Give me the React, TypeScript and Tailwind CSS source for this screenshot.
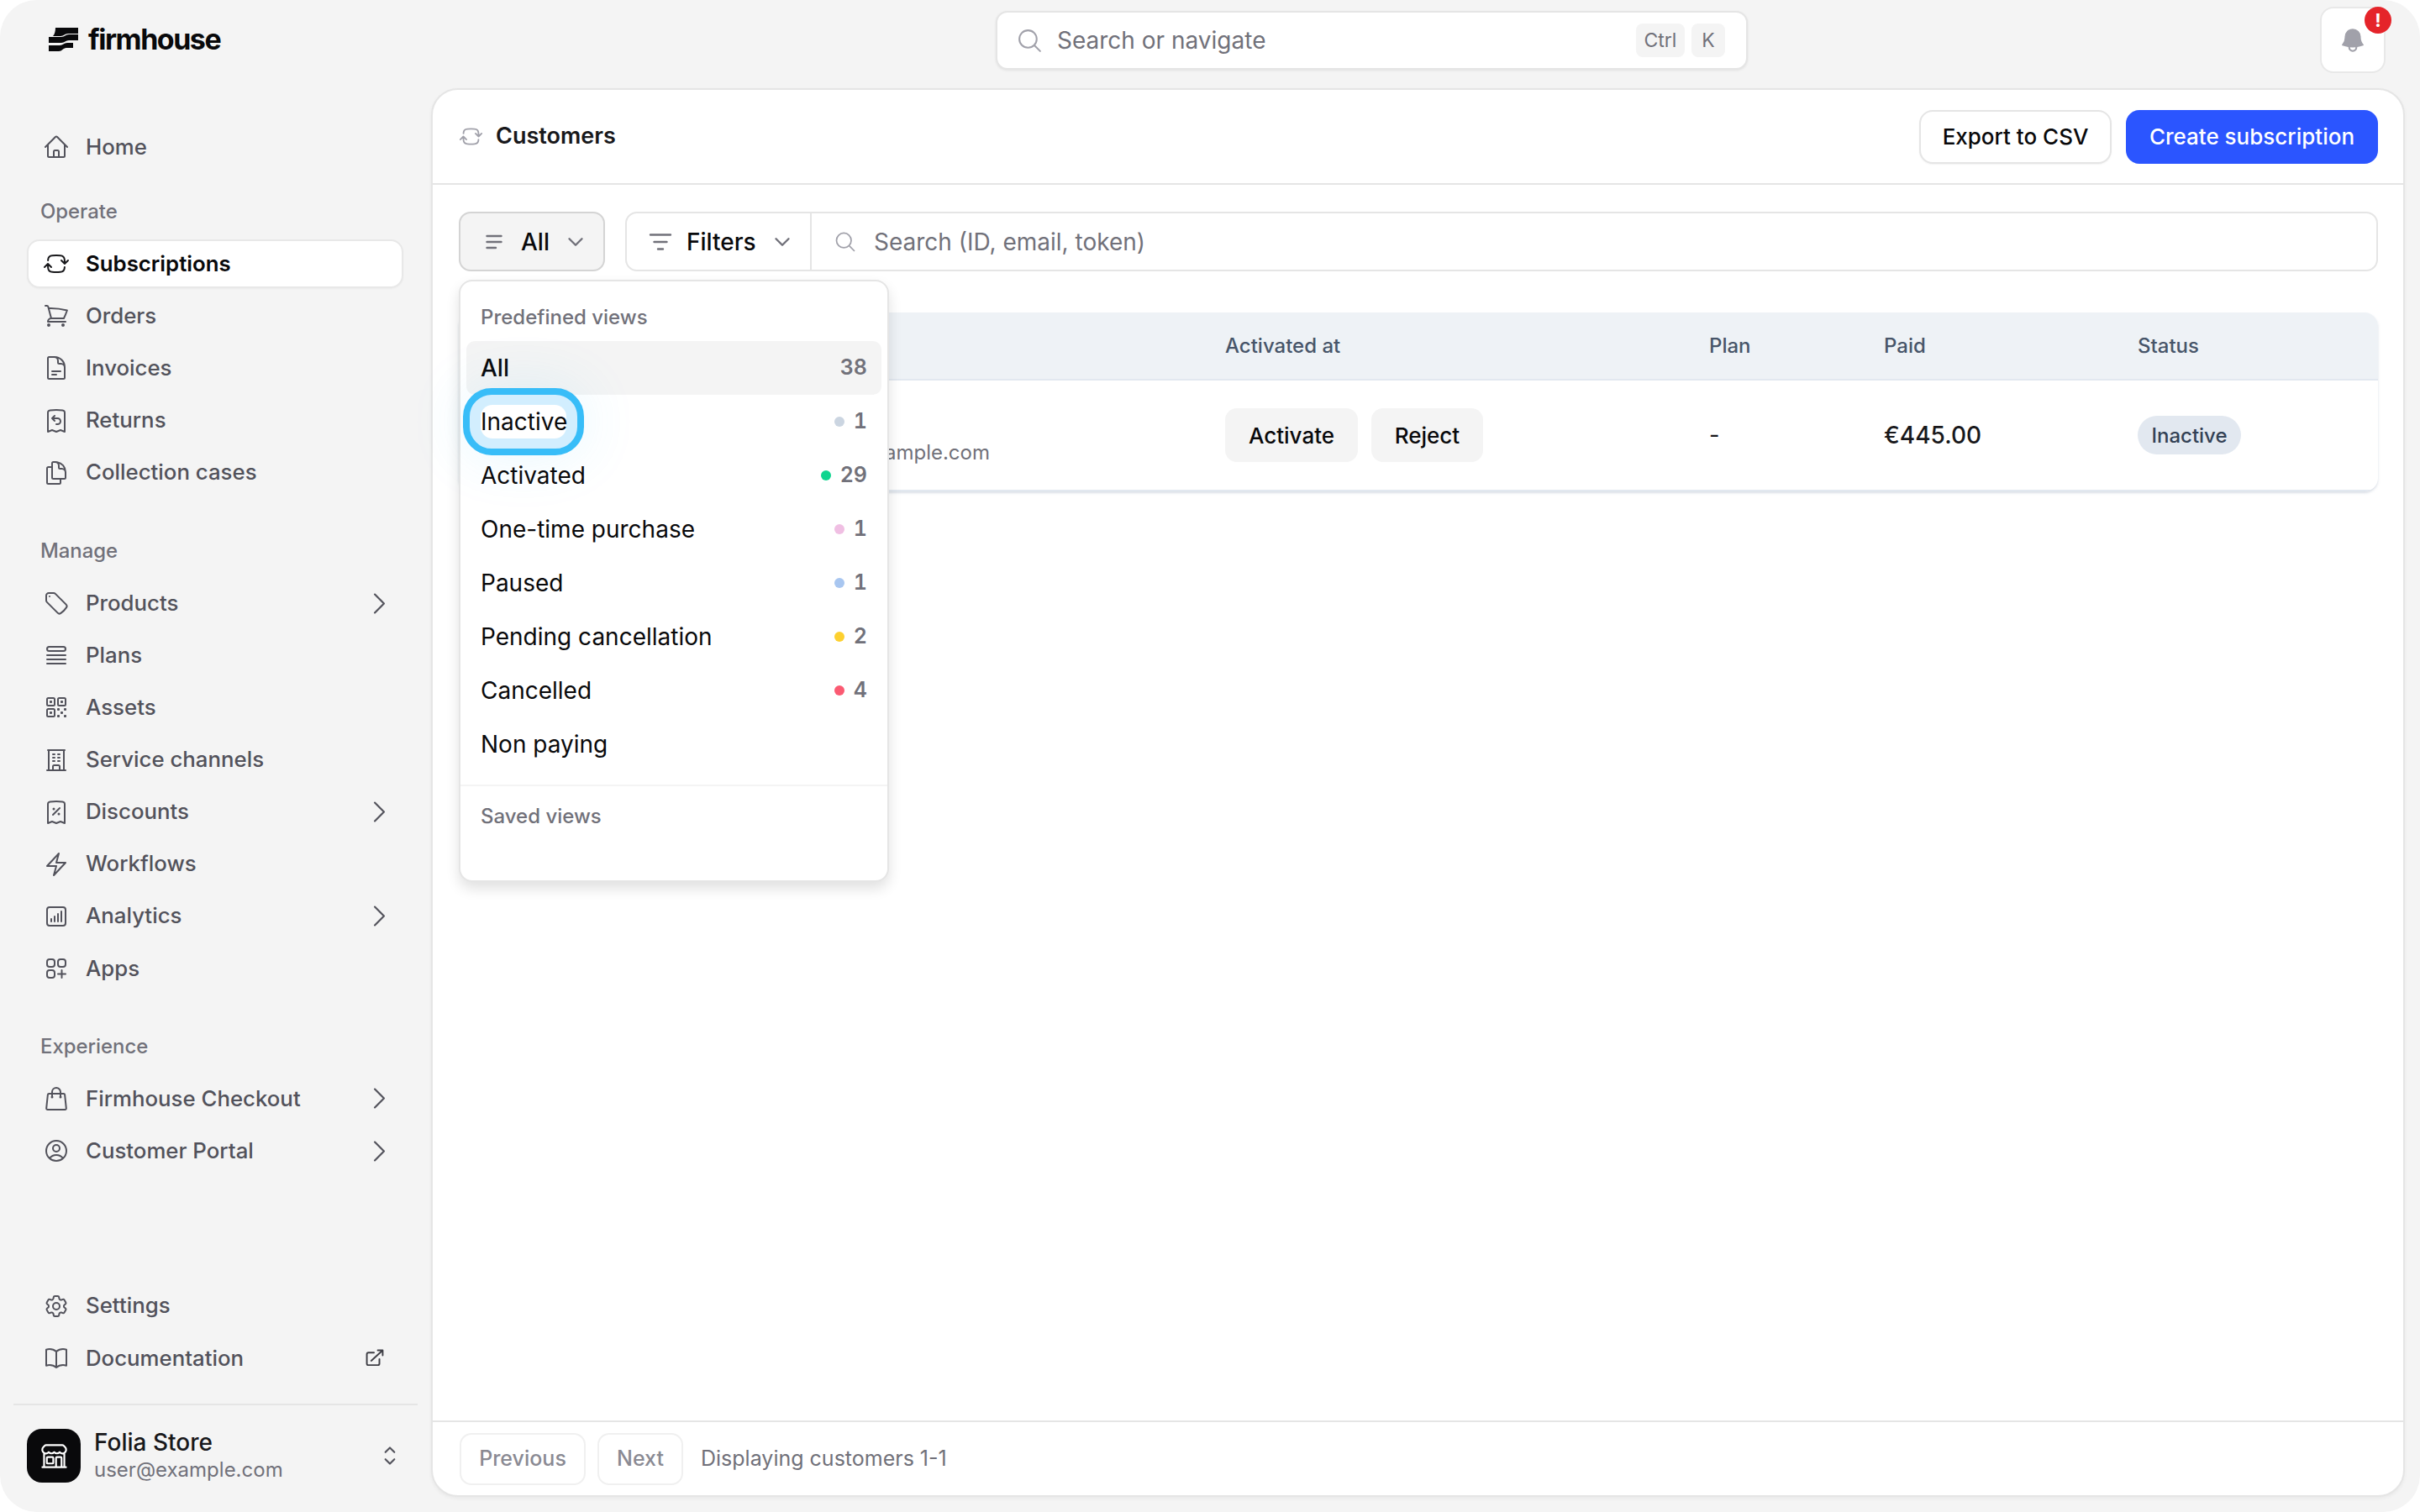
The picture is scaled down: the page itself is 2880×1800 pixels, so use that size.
import React from "react";
import {
  HiOutlineHome,
  HiOutlineArrowPathRoundedSquare,
  HiOutlineShoppingCart,
  HiOutlineDocumentText,
  HiOutlineReceiptRefund,
  HiOutlineDocumentDuplicate,
  HiOutlineTag,
  HiOutlineQueueList,
  HiOutlineQrCode,
  HiOutlineBuildingOffice,
  HiOutlineReceiptPercent,
  HiOutlineBolt,
  HiOutlineChartBarSquare,
  HiOutlineSquaresPlus,
  HiOutlineShoppingBag,
  HiOutlineUserCircle,
  HiOutlineCog6Tooth,
  HiOutlineBookOpen,
  HiOutlineBuildingStorefront,
  HiOutlineChevronRight,
  HiOutlineChevronUpDown,
  HiOutlineChevronDown,
  HiOutlineMagnifyingGlass,
  HiBell,
  HiMiniArrowTopRightOnSquare,
} from "react-icons/hi2";

type IconT = React.ComponentType<{ size?: number; className?: string }>;

function NavRow({ icon: Icon, label, active, chevron, external }: { icon: IconT; label: string; active?: boolean; chevron?: boolean; external?: boolean }) {
  return (
    <div
      className={
        active
          ? "flex h-[58px] items-center rounded-[15px] border-2 border-[#e8e8e8] bg-white pl-[16.5px] pr-[9px] shadow-[0_1px_2px_rgba(0,0,0,0.04)]"
          : "flex h-[58px] items-center rounded-[15px] border-2 border-transparent pl-[16.5px] pr-[9px]"
      }
    >
      <Icon size={32} className={active ? "shrink-0 text-[#18181b]" : "shrink-0 text-[#52525b]"} />
      <span className={active ? "ml-[19.5px] text-[25.8px] font-semibold text-[#09090b]" : "ml-[19.5px] text-[25.8px] font-medium text-[#52525b]"}>{label}</span>
      {chevron && <HiOutlineChevronRight size={35} className="ml-auto shrink-0 text-[#52525b]" />}
      {external && <HiMiniArrowTopRightOnSquare size={26} className="ml-auto mr-[10px] shrink-0 text-[#3f3f46]" />}
    </div>
  );
}

function SectionLabel({ children, className }: { children: string; className: string }) {
  return <div className={"flex h-[40px] items-center pl-[16px] text-[23.9px] font-medium text-[#71717a] " + className}>{children}</div>;
}

function ViewRow({ label, count, dot, active, focus }: { label: string; count?: string; dot?: string; active?: boolean; focus?: boolean }) {
  return (
    <div className={active ? "relative flex h-[64px] items-center rounded-[10px] bg-[#f4f4f4] pl-[17px] pr-[17px]" : "relative flex h-[64px] items-center rounded-[10px] pl-[17px] pr-[17px]"}>
      {focus && (
        <div className="absolute left-[-4px] top-[-8px] flex h-[80px] w-[144px] items-center justify-center rounded-[34px] border-[8px] border-[#38bdf8] bg-[#d2eefe] shadow-[0_0_70px_rgba(56,189,248,0.12)]">
          <div className="h-[40px] w-[102px] rounded-[14px] bg-white" />
        </div>
      )}
      <span className={active ? "relative text-[28px] font-medium text-[#09090b]" : "relative text-[28px] text-[#09090b]"}>{label}</span>
      {dot && <span className={"relative ml-auto h-[12px] w-[12px] rounded-full " + dot} />}
      {count && <span className={dot ? "relative ml-[11px] text-[25px] font-semibold tabular-nums text-[#71717a]" : "relative ml-auto text-[25px] font-semibold tabular-nums text-[#71717a]"}>{count}</span>}
    </div>
  );
}

function Logo() {
  return (
    <svg width="37" height="30" viewBox="0 0 37 30" className="shrink-0">
      <path d="M9 1H36V8H24C20 8 19 11 15 11H6C8 9 9 5 9 1Z" fill="#09090b" />
      <path d="M1 12H16C20 12 21 9 25 9H36V16H25C21 16 20 19 16 19H1Z" fill="#09090b" />
      <path d="M1 22H14C18 22 19 19 23 19H30V25H22C18 25 17 29 13 29H1Z" fill="#09090b" />
    </svg>
  );
}

export default function App() {
  return (
    <div className="h-[1800px] w-[2880px] overflow-hidden bg-white [font-family:Inter,sans-serif]">
      <div className="flex h-full w-full flex-col rounded-[44px] bg-[#f4f4f4]">
        {/* Top bar */}
        <div className="relative flex h-[105px] shrink-0 items-start">
          <div className="ml-[57px] mt-[32px] flex w-[206px] items-center gap-[11px]">
            <Logo />
            <span className="text-[34px] font-bold leading-[30px] tracking-[-1.5px] text-[#09090b]">firmhouse</span>
          </div>
          <div className="ml-[922px] mt-[13px] flex h-[70px] w-[895px] items-center rounded-[14px] border-2 border-[#e5e5e5] bg-white pl-[22px] pr-[25px] shadow-[0_1px_3px_rgba(0,0,0,0.08)]">
            <HiOutlineMagnifyingGlass size={33} className="shrink-0 text-[#a1a1aa]" />
            <span className="ml-[16px] text-[28px] text-[#71717a]">Search or navigate</span>
            <span className="ml-auto flex h-[40px] w-[58px] items-center justify-center rounded-[8px] bg-[#f4f4f4] text-[23px] text-[#71717a]">Ctrl</span>
            <span className="ml-[8px] flex h-[40px] w-[40px] items-center justify-center rounded-[8px] bg-[#f4f4f4] text-[23px] text-[#71717a]">K</span>
          </div>
          <div className="ml-[681px] mt-[8px] flex h-[79px] w-[78px] items-center justify-center rounded-[16px] border-2 border-[#e8e8e8] bg-white">
            <HiBell size={34} className="text-[#a1a1aa]" />
          </div>
          <span className="absolute left-[2814px] top-[8px] flex h-[32px] w-[32px] items-center justify-center rounded-full bg-[#e5242a] text-[22px] font-bold leading-none text-white">!</span>
        </div>

        <div className="flex min-h-0 flex-1">
          {/* Sidebar */}
          <div className="flex w-[513px] shrink-0 flex-col">
            <div className="flex flex-1 flex-col pl-[32px] pr-[33px] pt-[41px]">
              <NavRow icon={HiOutlineHome} label="Home" />
              <SectionLabel className="mt-[28px] mb-[13px]">Operate</SectionLabel>
              <div className="flex flex-col gap-[4.2px]">
                <NavRow icon={HiOutlineArrowPathRoundedSquare} label="Subscriptions" active />
                <NavRow icon={HiOutlineShoppingCart} label="Orders" />
                <NavRow icon={HiOutlineDocumentText} label="Invoices" />
                <NavRow icon={HiOutlineReceiptRefund} label="Returns" />
                <NavRow icon={HiOutlineDocumentDuplicate} label="Collection cases" />
              </div>
              <SectionLabel className="mt-[44px] mb-[13.5px]">Manage</SectionLabel>
              <div className="flex flex-col gap-[4.1px]">
                <NavRow icon={HiOutlineTag} label="Products" chevron />
                <NavRow icon={HiOutlineQueueList} label="Plans" />
                <NavRow icon={HiOutlineQrCode} label="Assets" />
                <NavRow icon={HiOutlineBuildingOffice} label="Service channels" />
                <NavRow icon={HiOutlineReceiptPercent} label="Discounts" chevron />
                <NavRow icon={HiOutlineBolt} label="Workflows" />
                <NavRow icon={HiOutlineChartBarSquare} label="Analytics" chevron />
                <NavRow icon={HiOutlineSquaresPlus} label="Apps" />
              </div>
              <SectionLabel className="mt-[44px] mb-[13px]">Experience</SectionLabel>
              <div className="flex flex-col gap-[4.2px]">
                <NavRow icon={HiOutlineShoppingBag} label="Firmhouse Checkout" chevron />
                <NavRow icon={HiOutlineUserCircle} label="Customer Portal" chevron />
              </div>
              <div className="mt-auto flex flex-col gap-[4.2px] pb-[25px]">
                <NavRow icon={HiOutlineCog6Tooth} label="Settings" />
                <NavRow icon={HiOutlineBookOpen} label="Documentation" external />
              </div>
            </div>
            <div className="mx-[16px] flex h-[129px] items-start border-t-2 border-[#e5e5e5] pl-[16px] pr-[16px] pt-[28px]">
              <div className="flex h-[64px] w-[64px] shrink-0 items-center justify-center rounded-[18px] bg-[#09090b]">
                <HiOutlineBuildingStorefront size={35} className="text-white" />
              </div>
              <div className="ml-[16px] flex flex-col">
                <span className="text-[28px] font-medium leading-[32px] text-[#18181b]">Folia Store</span>
                <span className="text-[24px] leading-[34px] text-[#71717a]">user@example.com</span>
              </div>
              <HiOutlineChevronUpDown size={34} className="ml-auto mt-[15px] text-[#52525b]" />
            </div>
          </div>

          {/* Main panel */}
          <div className="mb-[18px] mr-[18px] flex min-w-0 flex-1 flex-col rounded-[32px] border-2 border-[#e5e5e5] bg-white shadow-[0_2px_4px_rgba(0,0,0,0.05)]">
            <div className="flex h-[113px] shrink-0 items-center border-b-2 border-[#e5e5e5] pl-[31px] pr-[30px]">
              <HiOutlineArrowPathRoundedSquare size={29} className="shrink-0 text-[#a1a1aa]" />
              <span className="ml-[15px] text-[27px] font-semibold text-[#18181b]">Customers</span>
              <div className="ml-auto flex h-[64px] w-[229px] items-center justify-center rounded-[16px] border-2 border-[#e5e5e5] bg-white text-[26px] font-medium text-[#09090b] shadow-[0_1px_2px_rgba(0,0,0,0.05)]">Export to CSV</div>
              <div className="ml-[17px] flex h-[64px] w-[300px] items-center justify-center rounded-[16px] bg-[#2b55ff] text-[26px] font-medium text-white">Create subscription</div>
            </div>

            <div className="relative min-h-0 flex-1 pl-[31px] pr-[30px] pt-[32px]">
              {/* Toolbar */}
              <div className="flex h-[71px] items-stretch">
                <div className="flex w-[174px] items-center rounded-[14px] border-2 border-[#d4d4d4] bg-[#f4f4f4] pl-[30px]">
                  <svg width="20" height="20" viewBox="0 0 20 20" fill="none" stroke="#71717a" strokeWidth="2.4" strokeLinecap="round" className="shrink-0">
                    <path d="M1.5 3H18.5M1.5 10H18.5M1.5 17H12" />
                  </svg>
                  <span className="ml-[22px] text-[28px] font-medium text-[#09090b]">All</span>
                  <HiOutlineChevronDown size={24} className="ml-[19px] shrink-0 text-[#71717a] [stroke-width:2.4]" />
                </div>
                <div className="ml-[24px] flex min-w-0 flex-1 items-center rounded-[14px] border-2 border-[#e5e5e5] bg-white">
                  <div className="flex h-full w-[220px] shrink-0 items-center border-r-2 border-[#e5e5e5] pl-[26px]">
                    <svg width="28" height="22" viewBox="0 0 28 22" fill="none" stroke="#71717a" strokeWidth="2.4" strokeLinecap="round" className="shrink-0">
                      <path d="M2 2.5H26M6.5 11H21.5M11 19.5H17" />
                    </svg>
                    <span className="ml-[17px] text-[28px] font-medium text-[#09090b]">Filters</span>
                    <HiOutlineChevronDown size={24} className="ml-[19px] shrink-0 text-[#71717a] [stroke-width:2.4]" />
                  </div>
                  <HiOutlineMagnifyingGlass size={28} className="ml-[26px] shrink-0 text-[#a1a1aa]" />
                  <span className="ml-[20px] text-[28px] text-[#71717a]">Search (ID, email, token)</span>
                </div>
              </div>

              {/* Table */}
              <div className="mt-[49px] overflow-hidden rounded-[16px] bg-white shadow-[0_2px_3px_rgba(148,163,184,0.35)]">
                <div className="grid h-[81px] grid-cols-[912px_576px_208px_302px_1fr] items-center border-b-2 border-[#e2e8f0] bg-[#eef2f6] text-[24px] font-medium text-[#475569]">
                  <span />
                  <span>Activated at</span>
                  <span>Plan</span>
                  <span>Paid</span>
                  <span>Status</span>
                </div>
                <div className="grid h-[132px] grid-cols-[912px_576px_208px_302px_1fr] items-center border-b-2 border-[#e2e8f0]">
                  <span className="self-start pt-[68px] text-right pr-[280px] text-[24px] text-[#71717a]">user@example.com</span>
                  <div className="flex gap-[16px]">
                    <div className="flex h-[64px] w-[158px] items-center justify-center rounded-[14px] bg-[#f4f4f4] pt-[1px] text-[26px] font-medium text-[#09090b]">Activate</div>
                    <div className="flex h-[64px] w-[133px] items-center justify-center rounded-[14px] bg-[#f4f4f4] pt-[1px] text-[26px] font-medium text-[#09090b]">Reject</div>
                  </div>
                  <span className="text-[27px] text-[#18181b]">-</span>
                  <span className="text-[28px] font-medium text-[#18181b]">€445.00</span>
                  <span className="flex h-[46px] w-[123px] items-center justify-center rounded-full bg-[#e2e8f0] pt-[2px] text-[24px] font-medium text-[#334155]">Inactive</span>
                </div>
              </div>

              {/* Dropdown */}
              <div className="absolute left-[31px] top-[113px] h-[717px] w-[512px] rounded-[16px] border-2 border-[#e5e5e5] bg-white shadow-[0_8px_16px_rgba(0,0,0,0.12)]">
                <div className="flex h-[71px] items-start pl-[24px] pt-[23px] text-[24px] font-medium text-[#71717a]">
                  <span className="leading-[40px]">Predefined views</span>
                </div>
                <div className="flex flex-col px-[7px]">
                  <ViewRow label="All" count="38" active />
                  <ViewRow label="Inactive" count="1" dot="bg-[#cbd5e1]" focus />
                  <ViewRow label="Activated" count="29" dot="bg-[#0fd58f]" />
                  <ViewRow label="One-time purchase" count="1" dot="bg-[#f0bfe3]" />
                  <ViewRow label="Paused" count="1" dot="bg-[#a8c6f0]" />
                  <ViewRow label="Pending cancellation" count="2" dot="bg-[#fdd02f]" />
                  <ViewRow label="Cancelled" count="4" dot="bg-[#fb5a72]" />
                  <ViewRow label="Non paying" />
                </div>
                <div className="mt-[16px] border-t-2 border-[#f4f4f4] pl-[24px] pt-[16px] text-[24px] font-medium leading-[40px] text-[#71717a]">Saved views</div>
              </div>
            </div>

            <div className="flex h-[89px] shrink-0 items-center border-t-2 border-[#e5e5e5] pl-[32px]">
              <div className="flex h-[62px] w-[150px] items-center justify-center rounded-[14px] border-2 border-[#f0f0f0] text-[25px] font-medium text-[#8a8a93]">Previous</div>
              <div className="ml-[14px] flex h-[62px] w-[102px] items-center justify-center rounded-[14px] border-2 border-[#f0f0f0] text-[25px] font-medium text-[#8a8a93]">Next</div>
              <span className="ml-[21px] text-[25px] text-[#71717a]">Displaying customers 1-1</span>
            </div>
          </div>
        </div>
      </div>
    </div>
  );
}
